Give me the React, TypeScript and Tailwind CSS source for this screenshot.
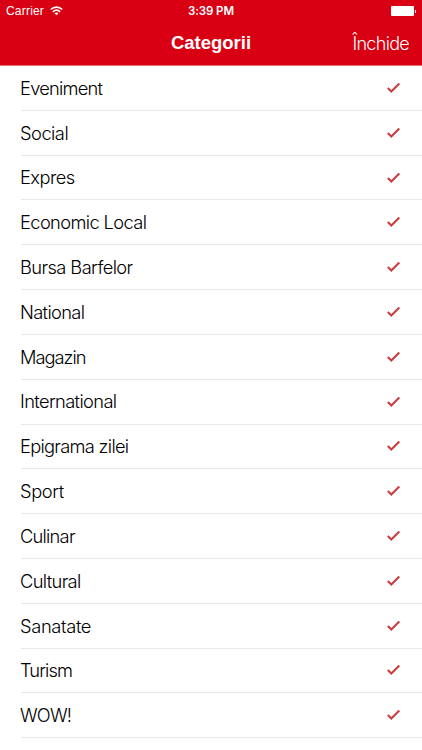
const categories = [
  { name: 'Eveniment', tracking: 'tracking-[-0.75px]' },
  { name: 'Social', tracking: 'tracking-[-0.5px]' },
  { name: 'Expres', tracking: 'tracking-[-0.55px]' },
  { name: 'Economic Local', tracking: 'tracking-[-0.61px]' },
  { name: 'Bursa Barfelor', tracking: 'tracking-[-0.58px]' },
  { name: 'National', tracking: 'tracking-[-0.65px]' },
  { name: 'Magazin', tracking: 'tracking-[-1px]' },
  { name: 'International', tracking: 'tracking-[-0.63px]' },
  { name: 'Epigrama zilei', tracking: 'tracking-[-0.7px]' },
  { name: 'Sport', tracking: 'tracking-[-0.4px]' },
  { name: 'Culinar', tracking: 'tracking-[-0.75px]' },
  { name: 'Cultural', tracking: 'tracking-[-0.65px]' },
  { name: 'Sanatate', tracking: 'tracking-[-0.35px]' },
  { name: 'Turism', tracking: 'tracking-[-0.9px]' },
  { name: 'WOW!', tracking: 'tracking-[-0.8px]' },
];

function Wifi() {
  return (
    <svg width="13" height="10" viewBox="0 0 13 10" fill="none" stroke="white" strokeWidth="1.7">
      <path d="M0.8 3.5C4 0.2 9 0.2 12.2 3.5" />
      <path d="M2.9 5.8C5 3.9 8 3.9 10.1 5.8" />
      <path d="M4.5 7.2C5.7 6.2 7.3 6.2 8.5 7.2L6.5 9.3Z" fill="white" stroke="none" />
    </svg>
  );
}

function Check() {
  return (
    <svg width="14" height="12" viewBox="0 0 14 12" fill="none" stroke="#cb3e42" strokeWidth="2.1">
      <path d="M0.8 6L4.3 9.5L12.3 1.5" />
    </svg>
  );
}

export default function App() {
  return (
    <div className="h-[750px] w-[422px] overflow-hidden bg-white font-['Liberation_Sans',sans-serif] text-white">
      <header className="h-[66px] border-b border-[#e5707a] bg-[#d80012]">
        <div className="grid h-[22px] grid-cols-3 items-center pl-[6px] pr-[6px] text-[12px] leading-none">
          <div className="flex items-center gap-[6px]">
            <span className="tracking-[0.2px]">Carrier</span>
            <Wifi />
          </div>
          <span className="pt-px text-center font-['Inter',sans-serif] text-[11.5px] font-semibold tracking-[-0.1px]">3:39 PM</span>
          <div className="flex items-center justify-end">
            <div className="h-[10px] w-[23px] rounded-[1px] bg-white" />
            <div className="ml-px h-[3px] w-px bg-white" />
          </div>
        </div>
        <div className="grid h-[43px] grid-cols-3 items-center px-[13px]">
          <span />
          <h1 className="text-center text-[18.5px] font-bold leading-none">Categorii</h1>
          <button className="text-right font-['Inter',sans-serif] text-[18px] font-light leading-none tracking-[-0.7px]">Închide</button>
        </div>
      </header>
      <ul className="font-['Inter',sans-serif] text-[18.3px] font-light text-black">
        {categories.map(({ name, tracking }) => (
          <li key={name} className="ml-[21px] flex h-[44.82px] items-center justify-between border-b border-[#e9e9e9] pr-[21px]">
            <span className={`-ml-px whitespace-nowrap leading-none ${tracking}`}>{name}</span>
            <Check />
          </li>
        ))}
      </ul>
    </div>
  );
}
